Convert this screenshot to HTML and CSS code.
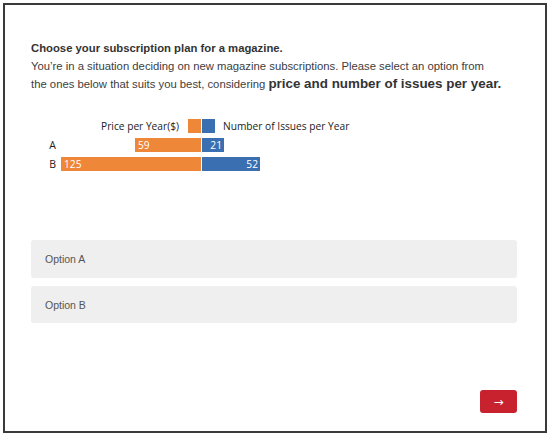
FILE: index.html
```html
<!DOCTYPE html>
<html>
<head>
<meta charset="utf-8">
<link rel="stylesheet" href="styles.css">
</head>
<body>
<div class="frame">
  <div class="question">
    <p class="title">Choose your subscription plan for a magazine.</p>
    <p class="desc">You’re in a situation deciding on new magazine subscriptions. Please select an option from<br>the ones below that suits you best, considering <b>price and number of issues per year.</b></p>
  </div>
  <div class="chart">
    <div class="lbl"></div>
    <div class="legend-left"><span>Price per Year($)</span><i class="sq orange"></i></div>
    <div class="legend-right"><i class="sq blue"></i><span>Number of Issues per Year</span></div>

    <div class="lbl">A</div>
    <div class="left"><div class="bar orange" style="width:66px">59</div></div>
    <div class="right"><div class="bar blue" style="width:22px">21</div></div>

    <div class="lbl">B</div>
    <div class="left"><div class="bar orange" style="width:140px">125</div></div>
    <div class="right"><div class="bar blue" style="width:58px">52</div></div>
  </div>
  <div class="options">
    <div class="option">Option A</div>
    <div class="option">Option B</div>
  </div>
  <div class="nav">
    <button class="next">→</button>
  </div>
</div>
</body>
</html>
```

FILE: styles.css
```css
html, body {
  margin: 0;
  padding: 0;
  background: #fff;
}
.frame {
  box-sizing: border-box;
  margin: 3px;
  width: 544px;
  height: 430px;
  border: 2px solid #3a3a3a;
  padding: 34px 20px 0 26px;
  font-family: "Liberation Sans", Arial, sans-serif;
}
.question p {
  margin: 0;
  font-size: 11.3px;
  line-height: 18px;
  color: #404040;
}
.question .title {
  font-weight: bold;
  color: #333;
}
.question b {
  color: #333;
  font-size: 13.4px;
}
.chart {
  margin-top: 26px;
  display: grid;
  grid-template-columns: 29px 140px auto;
  column-gap: 1px;
  row-gap: 5px;
  grid-auto-rows: 14px;
  font-family: "Open Sans", "Noto Sans", sans-serif;
  font-size: 10.2px;
  line-height: 14px;
  color: #222;
}
.chart .lbl {
  text-align: right;
  padding-right: 4px;
  font-size: 10.5px;
}
.legend-left {
  display: flex;
  justify-content: flex-end;
  align-items: center;
  gap: 9px;
}
.legend-right {
  display: flex;
  align-items: center;
  gap: 8px;
}
.sq {
  display: block;
  width: 13px;
  height: 14px;
}
.orange { background: #ef8738; }
.blue { background: #3a6fb1; }
.left {
  display: flex;
  justify-content: flex-end;
}
.right {
  display: flex;
}
.bar {
  height: 14px;
  color: #fff;
  font-size: 10.2px;
  line-height: 14px;
  box-sizing: border-box;
}
.left .bar {
  padding-left: 3px;
}
.right .bar {
  text-align: right;
  padding-right: 2px;
}
.options {
  margin-top: 69px;
  margin-right: 8px;
  display: flex;
  flex-direction: column;
  gap: 8px;
}
.option {
  height: 38px;
  box-sizing: border-box;
  background: #efefef;
  border-radius: 3px;
  padding-left: 14px;
  display: flex;
  align-items: center;
  font-size: 10.5px;
  color: #555;
}
.option + .option {
  height: 37px;
}
.nav {
  margin-top: 67px;
  margin-right: 8px;
  display: flex;
  justify-content: flex-end;
}
.next {
  width: 37px;
  height: 23px;
  border: none;
  border-radius: 3px;
  background: #c9222f;
  color: #fff;
  font-size: 12px;
  padding: 0;
  font-family: "DejaVu Sans", sans-serif;
}
```
